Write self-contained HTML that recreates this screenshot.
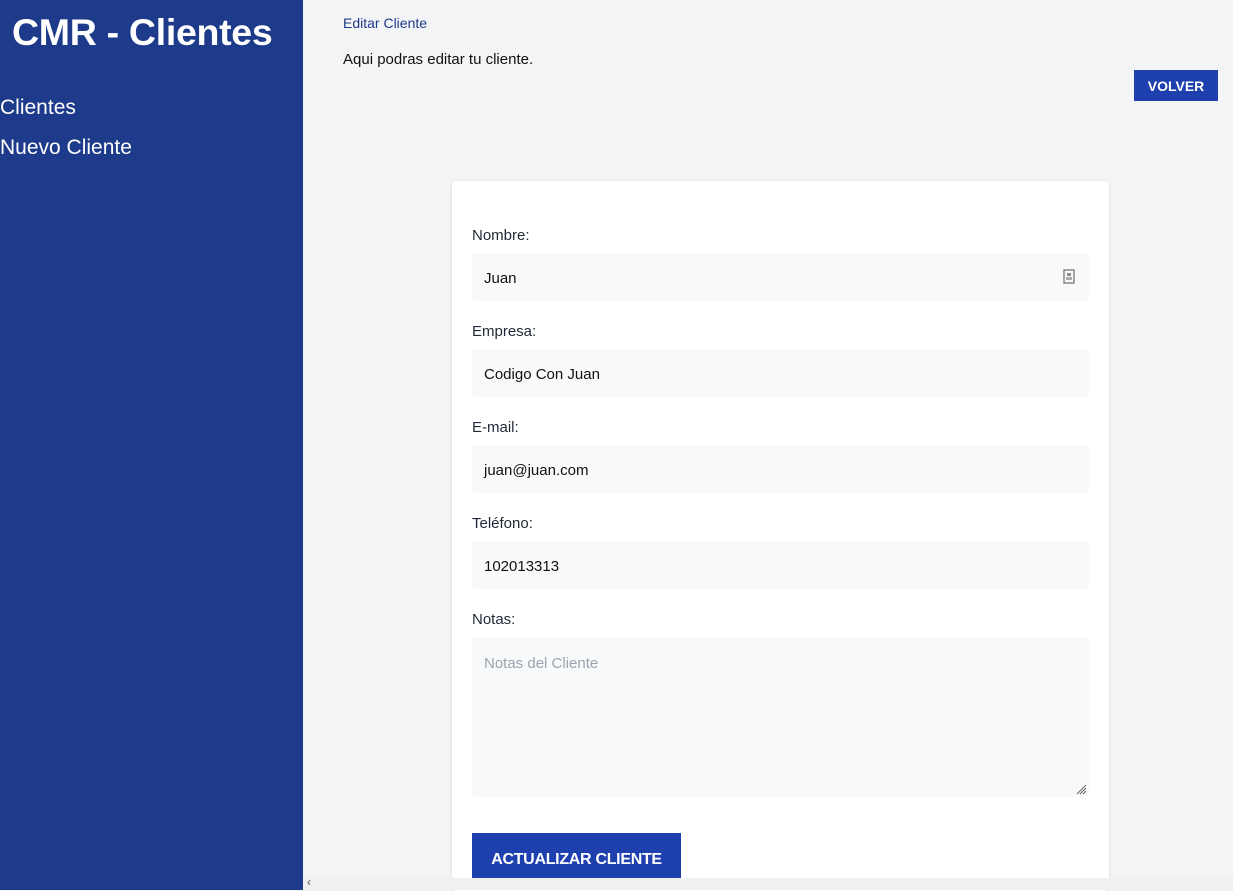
<!DOCTYPE html>
<html><head><style>
*{box-sizing:border-box;margin:0;padding:0}
body{width:1233px;height:890px;overflow:hidden;font-family:"Liberation Sans",sans-serif;background:#f3f4f6;position:relative}
.side{position:absolute;left:0;top:0;width:303px;height:890px;background:#1e3a8a;color:#fff}
.side h1{position:absolute;left:12px;top:11px;font-size:37.5px;font-weight:900;letter-spacing:-0.3px}
.side a{position:absolute;left:0;font-size:21px;color:#fff}
.t{position:absolute;left:343px;font-size:15px}
.btn{position:absolute;background:#1e40af;color:#fff;font-weight:bold;text-align:center}
.card{position:absolute;left:452px;top:181px;width:657px;height:710px;background:#fff;border-radius:4px;box-shadow:0 1px 3px rgba(0,0,0,.12)}
.lab{position:absolute;left:20px;font-size:15px;color:#1f2937}
.inp{position:absolute;left:20px;width:617px;height:48px;background:#f8f9fb;font-size:15px;color:#111;padding:17px 12px 0;border-radius:2px}
.sb{position:absolute;left:303px;top:878px;width:930px;height:12px;background:#f0f0f0}
</style></head><body>
<div class="side"><h1>CMR - Clientes</h1><a style="top:96px">Clientes</a><a style="top:136px">Nuevo Cliente</a></div>
<div class="t" style="top:15px;color:#1e3a8a;font-size:14px">Editar Cliente</div>
<div class="t" style="top:51px;color:#111">Aqui podras editar tu cliente.</div>
<div class="btn" style="left:1134px;top:70px;width:84px;height:31px;line-height:32px;font-size:14px">VOLVER</div>
<div class="card">
<div class="lab" style="top:46px">Nombre:</div>
<div class="inp" style="top:72px">Juan<svg style="position:absolute;right:14px;top:16px" width="12" height="15" viewBox="0 0 12 15"><rect x="1" y="1" width="10" height="13" fill="none" stroke="#777" stroke-width="1.3"/><rect x="4" y="4" width="4" height="3" fill="#888"/><rect x="3" y="8" width="6" height="3" fill="#aaa"/></svg></div>
<div class="lab" style="top:142px">Empresa:</div>
<div class="inp" style="top:168px">Codigo Con Juan</div>
<div class="lab" style="top:238px">E-mail:</div>
<div class="inp" style="top:264px">juan@juan.com</div>
<div class="lab" style="top:334px">Teléfono:</div>
<div class="inp" style="top:360px">102013313</div>
<div class="lab" style="top:430px">Notas:</div>
<div class="inp" style="top:456px;height:160px;color:#9ca3af;padding-top:18px">Notas del Cliente<svg style="position:absolute;right:2px;bottom:2px" width="12" height="12"><path d="M11 2L2 11M11 5L5 11M11 8L8 11" stroke="#666" stroke-width="1"/></svg></div>
<div class="btn" style="left:20px;top:652px;width:209px;height:48px;line-height:54px;font-size:16px;letter-spacing:-0.3px">ACTUALIZAR CLIENTE</div>
</div>
<div class="sb"><span style="position:absolute;left:4px;top:-3px;font-size:12px;color:#555">‹</span></div>
</body></html>
